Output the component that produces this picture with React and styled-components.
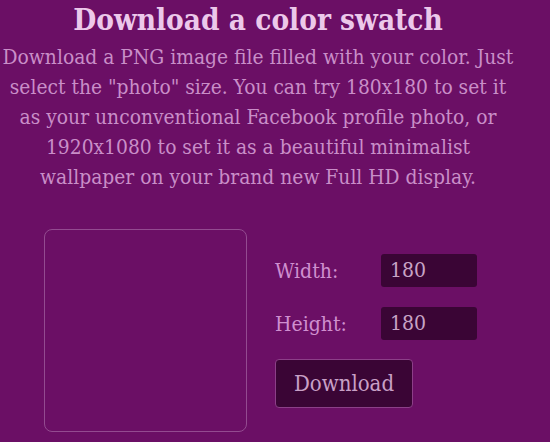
import React from "react";
import styled, { createGlobalStyle } from "styled-components";

const Global = createGlobalStyle`
  html, body { margin: 0; padding: 0; background: #6b0f65; }
  body { font-family: "DejaVu Serif Condensed", "DejaVu Serif", serif; font-stretch: condensed; }
`;

const Page = styled.div`
  width: 516px;
  height: 442px;
  background: #6b0f65;
  overflow: hidden;
  display: flex;
  flex-direction: column;
  align-items: center;
`;

const Title = styled.h1`
  margin: 0;
  font-size: 29.5px;
  line-height: 40px;
  font-weight: bold;
  color: #ecc8ea;
  text-align: center;
`;

const Intro = styled.p`
  margin: 2px 0 0;
  font-size: 20.8px;
  line-height: 30px;
  color: #c98ec8;
  text-align: center;
  white-space: nowrap;
`;

const Row = styled.div`
  display: flex;
  align-self: flex-start;
  margin: 37px 0 0 44px;
  gap: 28px;
`;

const Swatch = styled.div`
  width: 201px;
  height: 201px;
  border: 1px solid #934b90;
  border-radius: 8px;
`;

const Controls = styled.div`
  display: flex;
  flex-direction: column;
  margin-top: 25px;
`;

const Field = styled.div`
  display: flex;
  align-items: center;
  height: 33px;
  margin-bottom: 20px;
`;

const Label = styled.label`
  width: 106px;
  font-size: 21px;
  color: #cf8fcf;
`;

const Input = styled.div`
  width: 96px;
  height: 33px;
  box-sizing: border-box;
  padding-left: 9px;
  background: #3a0535;
  border-radius: 3px;
  font-size: 21px;
  line-height: 33px;
  color: #c8a4c6;
`;

const Button = styled.button`
  width: 138px;
  height: 49px;
  margin-top: -1px;
  padding: 0;
  background: #3a0535;
  border: 1px solid #8c3f88;
  border-radius: 4px;
  font-family: inherit;
  font-stretch: condensed;
  font-size: 22px;
  color: #c8a0c6;
  cursor: pointer;
`;

export default function App() {
  return (
    <>
      <Global />
      <Page>
        <Title>Download a color swatch</Title>
        <Intro>
          Download a PNG image file filled with your color. Just
          <br />
          select the "photo" size. You can try 180x180 to set it
          <br />
          as your unconventional Facebook profile photo, or
          <br />
          1920x1080 to set it as a beautiful minimalist
          <br />
          wallpaper on your brand new Full HD display.
        </Intro>
        <Row>
          <Swatch />
          <Controls>
            <Field>
              <Label>Width:</Label>
              <Input>180</Input>
            </Field>
            <Field>
              <Label>Height:</Label>
              <Input>180</Input>
            </Field>
            <Button>Download</Button>
          </Controls>
        </Row>
      </Page>
    </>
  );
}
